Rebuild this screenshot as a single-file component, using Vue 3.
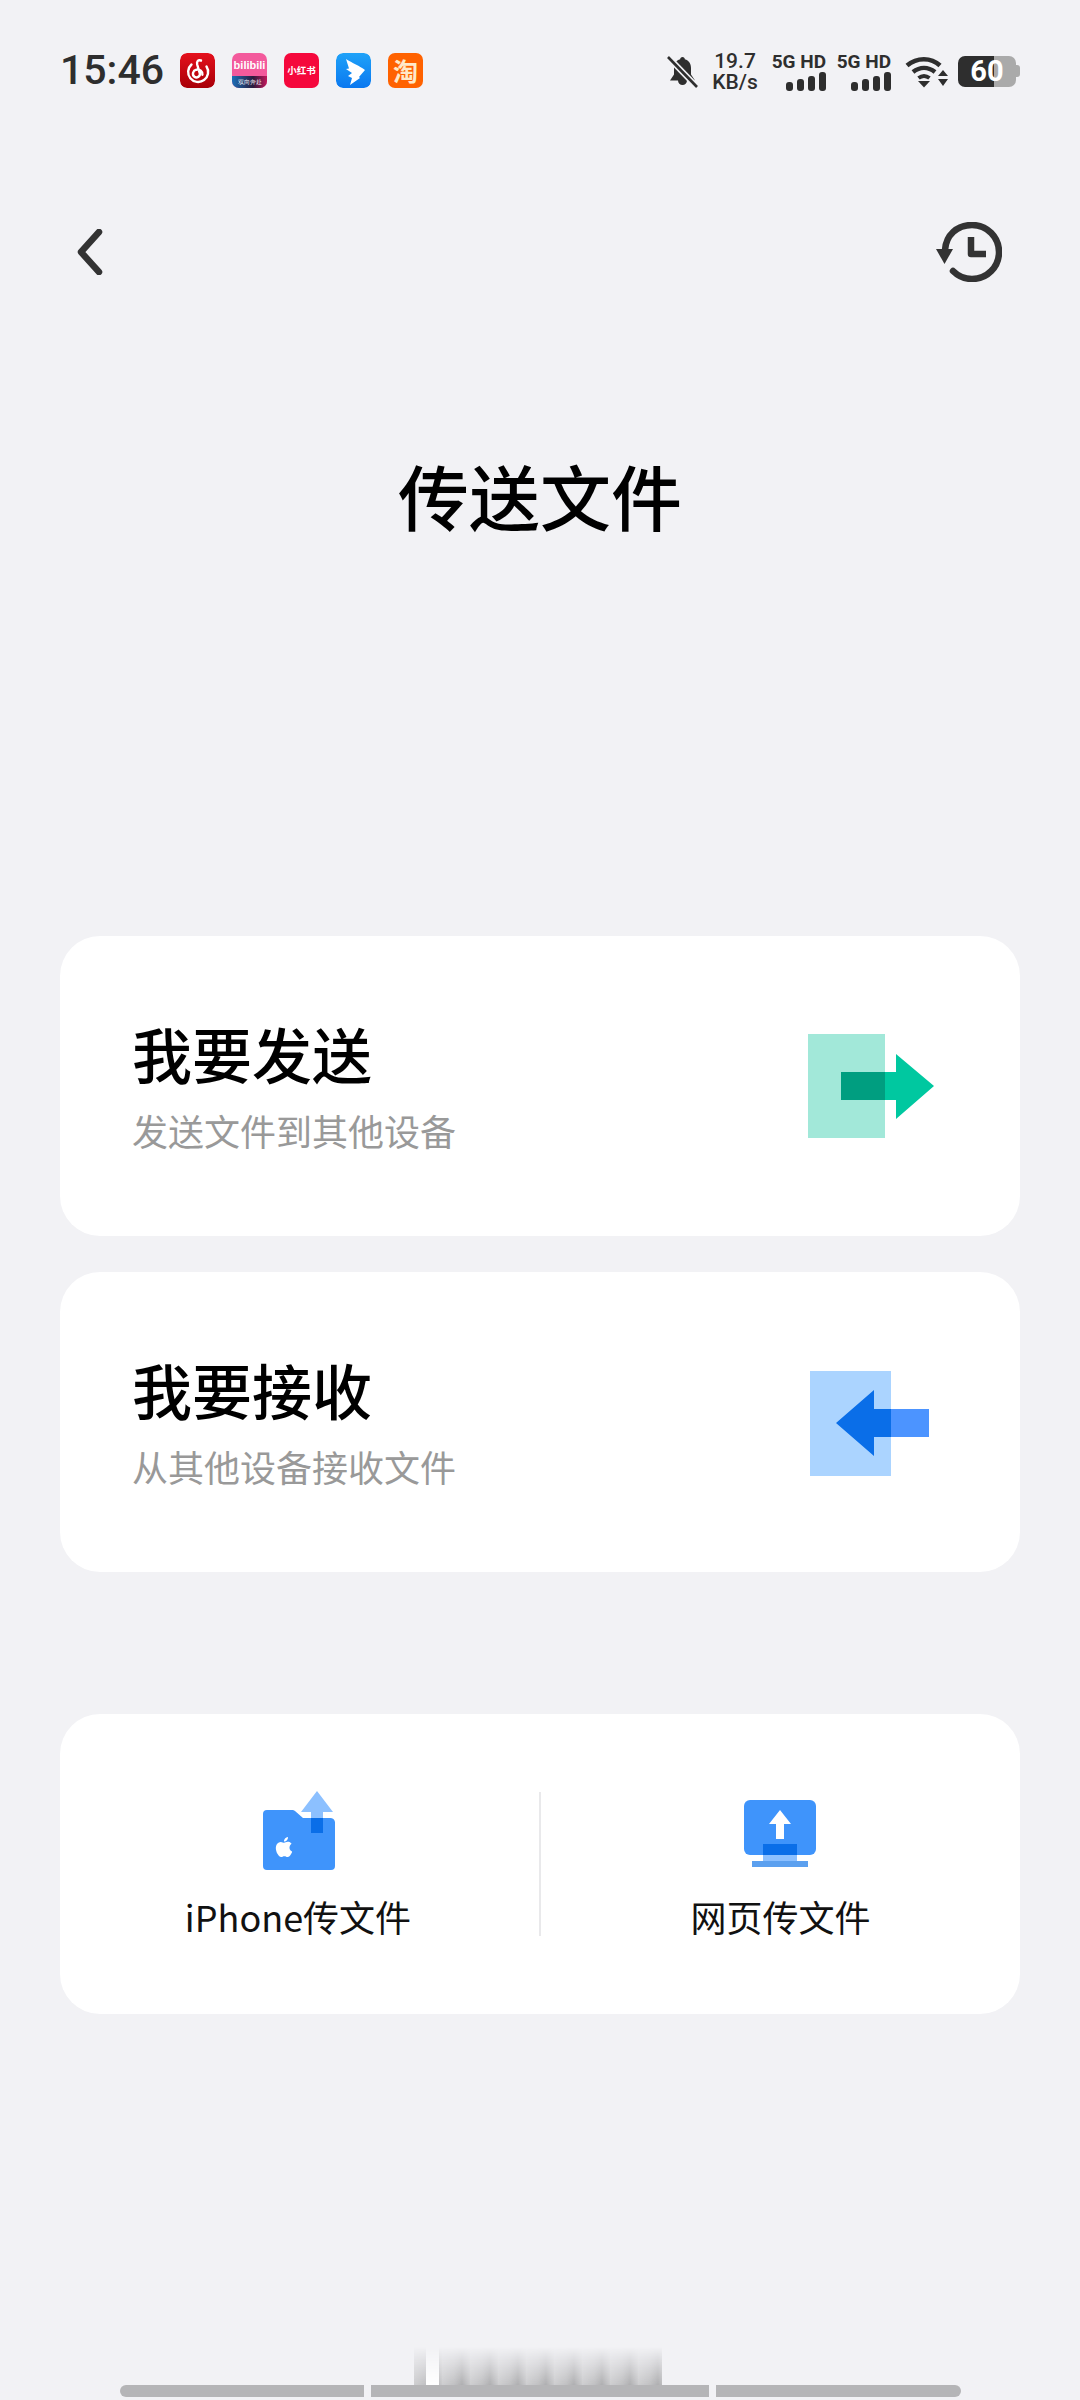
<script setup>
const signals = [1, 2]
const barHeights = [9, 12, 15, 19]
</script>

<template>
  <main class="page">
    <header class="status">
      <span class="time">15:46</span>
      <div class="apps">
        <svg class="app" viewBox="0 0 35 35">
          <defs>
            <linearGradient id="ne" x1="0" y1="0" x2="0" y2="1">
              <stop offset="0" stop-color="#e5101c" />
              <stop offset="1" stop-color="#a80008" />
            </linearGradient>
          </defs>
          <rect width="35" height="35" rx="7" fill="url(#ne)" />
          <path d="M21 7.500c-3-1-4.500 1-3.800 4l2.600 9c.6 3-3 5-5.400 3.200-2.600-2-1.600-6.200 2-7 3.400-.6 6.400 1.600 6 5" fill="none" stroke="#fff" stroke-width="2.400" stroke-linecap="round" />
          <path d="M11.500 11.500a10 10 0 1 0 15 2" fill="none" stroke="#fff" stroke-width="2.400" stroke-linecap="round" />
        </svg>
        <div class="app bili">
          <span class="bili-top">bilibili</span>
          <span class="bili-bottom">双向奔赴</span>
        </div>
        <div class="app red">小红书</div>
        <svg class="app" viewBox="0 0 35 35">
          <defs>
            <linearGradient id="ding" x1="0" y1="0" x2="0" y2="1">
              <stop offset="0" stop-color="#1fa2f8" />
              <stop offset="1" stop-color="#0a78f0" />
            </linearGradient>
          </defs>
          <rect width="35" height="35" rx="7" fill="url(#ding)" />
          <path d="M10 6C16 10 24 13 29 17L23 24 24 25 14 32 16 25 12 23 16 20 10 16 13 15.500z" fill="#fff" />
        </svg>
        <div class="app tao">淘</div>
      </div>
      <div class="indicators">
        <svg class="bell" viewBox="0 0 31 33">
          <path d="M15.500 2c-1.400 0-2.300 1-2.300 2.200C9 5.400 7 8.800 7 13v6.500L3 25.500h8a4.500 4.500 0 0 0 9 0h8l-4-6V13c0-4.200-2-7.600-6.200-8.800C17.800 3 16.900 2 15.500 2z" fill="#2e2e2e" />
          <path d="M1 2l29 30" stroke="#f2f2f5" stroke-width="6" />
          <path d="M1 2l29 30" stroke="#2e2e2e" stroke-width="2.600" />
        </svg>
        <div class="speed">19.7<br />KB/s</div>
        <div v-for="s in signals" :key="s" class="signal">
          <span class="net">5G HD</span>
          <div class="bars">
            <i v-for="h in barHeights" :key="h" :style="{ height: h + 'px' }"></i>
          </div>
        </div>
        <svg class="wifi" viewBox="0 0 44 34">
          <path d="M2 11.500C12 3 26 3 35 11.500" fill="none" stroke="#2e2e2e" stroke-width="4.500" />
          <path d="M8 18c7-5.500 15-5.500 22 0" fill="none" stroke="#2e2e2e" stroke-width="4.500" />
          <path d="M13.500 24c4-3 7-3 11 0" fill="none" stroke="#2e2e2e" stroke-width="4" />
          <path d="M13 27h12l-6 6.500z" fill="#2e2e2e" />
          <path d="M33 22l5-6 5 6zM33 25h10l-5 7z" fill="#2e2e2e" />
        </svg>
        <div class="battery">
          <div class="cell"><span>60</span></div>
          <i class="cap"></i>
        </div>
      </div>
    </header>

    <nav class="nav">
      <svg class="back" viewBox="0 0 26 46">
        <path d="M22 3L4 23l18 20" fill="none" stroke="#333" stroke-width="6.500" stroke-linecap="round" stroke-linejoin="round" />
      </svg>
      <svg class="history" viewBox="0 0 66 60">
        <path d="M9 28C10 13 21 3 36 3c15 0 27 12 27 27S51 57 36 57c-8 0-14-3-19-8" fill="none" stroke="#333" stroke-width="6.500" stroke-linecap="round" />
        <path d="M0 27h17l-8.500 15z" fill="#333" />
        <path d="M35 15v17h15" fill="none" stroke="#333" stroke-width="6.500" stroke-linejoin="round" />
      </svg>
    </nav>

    <h1 class="title">传送文件</h1>

    <section class="card">
      <div class="card-text">
        <h2>我要发送</h2>
        <p>发送文件到其他设备</p>
      </div>
      <svg class="card-icon" viewBox="0 0 140 116">
        <rect x="8" y="6" width="77" height="104" fill="#a2e8d9" />
        <path d="M85 44h11V26l38 32-38 33V72H85z" fill="#00c8a0" />
        <rect x="41" y="44" width="44" height="28" fill="#009e80" />
      </svg>
    </section>

    <section class="card second">
      <div class="card-text">
        <h2>我要接收</h2>
        <p>从其他设备接收文件</p>
      </div>
      <svg class="card-icon" viewBox="0 0 140 116">
        <rect x="10" y="7" width="81" height="105" fill="#abd4ff" />
        <rect x="91" y="45" width="38" height="28" fill="#4c94ff" />
        <path d="M36 59l38-33v19h17v28H74v19z" fill="#0a6ee8" />
      </svg>
    </section>

    <section class="card tools">
      <div class="tool">
        <svg class="tool-icon" viewBox="0 0 80 84">
          <path d="M7 22h25a4 4 0 0 1 3 1l8 7h27a5 5 0 0 1 5 4v44a4 4 0 0 1-4 4H7a4 4 0 0 1-4-4V26a4 4 0 0 1 4-4z" fill="#3f94fb" />
          <path d="M57 3L73 24H63V45H51V24H41z" fill="#8cc0ff" />
          <path d="M51 30h12v15H51z" fill="#0a6ee8" />
          <svg x="14" y="47" width="20" height="24" viewBox="0 0 24 24">
            <path d="M12.152 6.896c-.948 0-2.415-1.078-3.960-1.040-2.040.027-3.910 1.183-4.961 3.014-2.117 3.675-.546 9.103 1.519 12.090 1.013 1.454 2.208 3.090 3.792 3.039 1.520-.065 2.090-.987 3.935-.987 1.831 0 2.350.987 3.960.948 1.637-.026 2.676-1.480 3.676-2.948 1.156-1.688 1.636-3.325 1.662-3.415-.039-.013-3.182-1.221-3.220-4.857-.026-3.040 2.480-4.494 2.597-4.559-1.429-2.090-3.623-2.324-4.390-2.376-2-.156-3.675 1.090-4.610 1.090zM15.530 3.830c.843-1.012 1.400-2.427 1.245-3.830-1.207.052-2.662.805-3.532 1.818-.780.896-1.454 2.338-1.273 3.714 1.338.104 2.715-.688 3.559-1.701" fill="#fff" />
          </svg>
        </svg>
        <span>iPhone传文件</span>
      </div>
      <i class="divider"></i>
      <div class="tool">
        <svg class="tool-icon" viewBox="0 0 80 84">
          <rect x="3" y="12" width="72" height="55" rx="6" fill="#3f94fb" />
          <path d="M39 22L50 36H43V51H35V36H28z" fill="#fff" />
          <rect x="22" y="56" width="34" height="11" fill="#0a6ee8" />
          <rect x="22" y="67" width="34" height="6" fill="#8cc0ff" />
          <rect x="11" y="73" width="56" height="6" fill="#5ba0ef" />
        </svg>
        <span>网页传文件</span>
      </div>
    </section>

    <div class="smear">
      <i class="glint"></i>
    </div>
    <div class="gesture">
      <i></i><i></i><i></i>
    </div>
  </main>
</template>

<style scoped>
.page {
  position: relative;
  height: 2400px;
  box-sizing: border-box;
  background: #f2f2f5;
  font-family: "Noto Sans CJK SC", "Noto Sans", sans-serif;
  overflow: hidden;
}

.status {
  display: flex;
  align-items: center;
  height: 40px;
  padding: 50px 60px 0 60px;
  color: #2e2e2e;
}
.time {
  width: 120px;
  font-family: Roboto, sans-serif;
  font-size: 41px;
  font-weight: 500;
  line-height: 40px;
}
.apps {
  display: flex;
  gap: 17px;
}
.app {
  display: block;
  width: 35px;
  height: 35px;
  border-radius: 7px;
  overflow: hidden;
}
.bili {
  display: flex;
  flex-direction: column;
  background: #f35a9c;
  color: #fff;
  font-family: "Liberation Sans", sans-serif;
  text-align: center;
}
.bili-top {
  height: 23px;
  font-size: 11px;
  font-weight: 700;
  line-height: 25px;
}
.bili-bottom {
  height: 12px;
  background: linear-gradient(90deg, #1b6fb8, #2a1b3d 60%, #c2185b);
  font-size: 6px;
  line-height: 12px;
  white-space: nowrap;
}
.red {
  background: #f5083c;
  color: #fff;
  font-size: 9.500px;
  font-weight: 700;
  line-height: 35px;
  text-align: center;
  white-space: nowrap;
}
.tao {
  background: #ff6200;
  color: #ffe9c8;
  font-size: 25px;
  font-weight: 700;
  line-height: 35px;
  text-align: center;
}
.indicators {
  display: flex;
  align-items: center;
  margin-left: auto;
}
.bell {
  width: 31px;
  height: 33px;
  margin-top: 2px;
}
.speed {
  width: 52px;
  margin: 3px 0 0 11px;
  font-family: Roboto, sans-serif;
  font-size: 21px;
  font-weight: 500;
  line-height: 21px;
  text-align: center;
}
.signal {
  display: flex;
  flex-direction: column;
  align-items: flex-end;
  width: 55px;
  margin: 2px 0 0 10px;
}
.net {
  font-family: Roboto, sans-serif;
  font-size: 19px;
  font-weight: 700;
  line-height: 19px;
  white-space: nowrap;
}
.bars {
  display: flex;
  align-items: flex-end;
  gap: 4px;
  height: 19px;
  margin-top: 1px;
}
.bars i {
  display: block;
  width: 7px;
  border-radius: 3px;
  background: #2e2e2e;
}
.wifi {
  width: 44px;
  height: 34px;
  margin: 2px 0 0 14px;
}
.battery {
  display: flex;
  align-items: center;
  margin: 2px 0 0 9px;
}
.cell {
  width: 58px;
  height: 31px;
  border-radius: 7px;
  background: linear-gradient(90deg, #2e2e2e 62%, #aaa 62%);
  color: #fff;
  font-family: Roboto, sans-serif;
  font-size: 29px;
  font-weight: 700;
  line-height: 31px;
  text-align: center;
}
.cap {
  width: 4px;
  height: 12px;
  border-radius: 0 3px 3px 0;
  background: #aaa;
}

.nav {
  display: flex;
  align-items: center;
  justify-content: space-between;
  margin-top: 131px;
  padding: 0 78px 0 77px;
  height: 62px;
}
.back {
  width: 26px;
  height: 46px;
}
.history {
  width: 66px;
  height: 60px;
}

.title {
  margin: 166px 0 0;
  color: #000;
  font-size: 71px;
  font-weight: 500;
  line-height: 90px;
  text-align: center;
}

.card {
  display: flex;
  align-items: center;
  justify-content: space-between;
  height: 300px;
  margin: 0 60px;
  padding: 0 80px 0 72px;
  border-radius: 40px;
  background: #fff;
}
.title + .card {
  margin-top: 397px;
}
.second {
  margin-top: 36px;
}
.card-text {
  padding-bottom: 3px;
}
.card-text h2 {
  margin: 0;
  color: #000;
  font-size: 60px;
  font-weight: 500;
  line-height: 76px;
}
.card-text p {
  margin: 15px 0 0;
  color: #999;
  font-size: 36px;
  line-height: 48px;
}
.card-icon {
  width: 140px;
  height: 116px;
}

.tools {
  position: relative;
  justify-content: flex-start;
  margin-top: 142px;
  padding: 0;
}
.tool {
  display: flex;
  flex: 1;
  flex-direction: column;
  align-items: center;
  color: #111;
  font-size: 36px;
  line-height: 48px;
}
.tool span {
  margin-right: 3px;
}
.tool:last-child span {
  margin-right: 0;
}
.tool-icon {
  width: 80px;
  height: 84px;
  margin-bottom: 20px;
}
.divider {
  width: 2px;
  height: 144px;
  background: #e9e9eb;
}

.smear {
  position: absolute;
  left: 414px;
  bottom: 15px;
  width: 248px;
  height: 38px;
  background: repeating-linear-gradient(90deg, #cdcdcf 0, #c0c0c2 12px, #aeaeb0 20px, #c8c8ca 28px);
  -webkit-mask-image: linear-gradient(180deg, transparent, #000);
  mask-image: linear-gradient(180deg, transparent, #000);
}
.glint {
  position: absolute;
  left: 12px;
  top: 0;
  bottom: 0;
  width: 13px;
  background: #fff;
}
.gesture {
  position: absolute;
  left: 120px;
  bottom: 3px;
  display: flex;
  gap: 7px;
  height: 12px;
}
.gesture i {
  display: block;
  background: #b5b5b7;
}
.gesture i:nth-child(1) {
  width: 244px;
  border-radius: 6px 0 0 6px;
}
.gesture i:nth-child(2) {
  width: 338px;
}
.gesture i:nth-child(3) {
  width: 245px;
  border-radius: 0 6px 6px 0;
}
</style>

<style>
html, body {
  background: #f2f2f5;
}
</style>
